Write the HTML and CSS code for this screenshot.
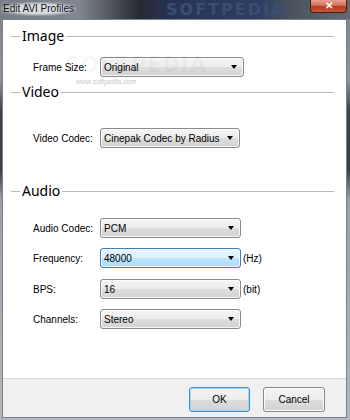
FILE: index.html
```html
<!DOCTYPE html>
<html lang="en">

<head>
    <meta charset="UTF-8">
    <meta name="viewport" content="width=device-width, initial-scale=1.0">
    <title>Edit AVI Profiles</title>
    <link rel="stylesheet" href="styles.css">
</head>

<body>
    <div class="window">
        <div class="titlebar">
            <span class="title">Edit AVI Profiles</span>
            <span class="titleMark">SOFTPEDIA</span>
            <a class="close">&#10005;</a>
        </div>

        <div class="client">
            <div class="panel">
                <div class="mark">SOFTPEDIA</div>
                <div class="markUrl">www.softpedia.com</div>

                <div class="legend"><span>Image</span></div>
                <div class="row rowFrame">
                    <span class="label">Frame Size:</span>
                    <div class="combo w144"><span>Original</span><i class="arrow"></i></div>
                </div>

                <div class="legend legendVideo"><span>Video</span></div>
                <div class="row rowVideo">
                    <span class="label">Video Codec:</span>
                    <div class="combo w140"><span>Cinepak Codec by Radius</span><i class="arrow"></i></div>
                </div>

                <div class="legend legendAudio"><span>Audio</span></div>
                <div class="audioRows">
                    <div class="row">
                        <span class="label">Audio Codec:</span>
                        <div class="combo w141"><span>PCM</span><i class="arrow"></i></div>
                    </div>
                    <div class="row">
                        <span class="label">Frequency:</span>
                        <div class="combo w141 focus"><span>48000</span><i class="arrow"></i></div>
                        <span class="unit">(Hz)</span>
                    </div>
                    <div class="row rowBps">
                        <span class="label">BPS:</span>
                        <div class="combo w141"><span>16</span><i class="arrow"></i></div>
                        <span class="unit">(bit)</span>
                    </div>
                    <div class="row">
                        <span class="label">Channels:</span>
                        <div class="combo w141"><span>Stereo</span><i class="arrow"></i></div>
                    </div>
                </div>
            </div>

            <div class="footer">
                <a class="btn default">OK</a>
                <a class="btn">Cancel</a>
            </div>
        </div>
    </div>
</body>

</html>
```

FILE: styles.css
```css
html {
    width: 100%;
    height: 100%;
}

body {
    margin: 0;
    width: 350px;
    height: 420px;
    overflow: hidden;
    font-family: "Liberation Sans", Arial, sans-serif;
    font-size: 10px;
    color: #000;
}

.window {
    width: 350px;
    height: 420px;
    display: flex;
    flex-direction: column;
    background: linear-gradient(#7d838b 0, #8d939b 80px, #3f444c 110px, #3a3f47 170px, #9aa0a8 200px, #b3b8be 420px);
}

.titlebar {
    position: relative;
    height: 19px;
    display: flex;
    align-items: flex-start;
    background: linear-gradient(90deg, #767c84 0, #80868d 80px, #4a4f57 115px, #262a33 140px, #263353 170px, #2e3e62 260px, #4d545e 295px, #646a72 350px);
}

.title {
    margin: 2px 0 0 1px;
    padding: 0 2px;
    font-family: "Liberation Sans", sans-serif;
    font-size: 10px;
    line-height: 14px;
    color: #111;
    white-space: nowrap;
    background: radial-gradient(ellipse at center, rgba(220, 223, 228, 0.95) 45%, rgba(200, 204, 210, 0) 75%);
    text-shadow: 0 0 4px #e8eaee;
}

.titleMark {
    position: absolute;
    left: 166px;
    top: 1px;
    font-family: "DejaVu Sans", sans-serif;
    font-weight: bold;
    font-size: 16px;
    line-height: 18px;
    letter-spacing: 2px;
    color: #3c4d72;
}

.close {
    margin-left: auto;
    margin-right: 3px;
    width: 35px;
    height: 12px;
    border: 1px solid #4a1c12;
    border-top: none;
    border-radius: 0 0 4px 4px;
    background: linear-gradient(#e5a18f 0, #d2715b 45%, #b83a22 55%, #c9563b 100%);
    color: #fff;
    font-size: 10px;
    font-weight: bold;
    line-height: 12px;
    text-align: center;
    position: relative;
    z-index: 1;
}

.client {
    flex: 1;
    margin: 0 3px 2px 2px;
    border: 1px solid #7a828c;
    display: flex;
    flex-direction: column;
    background-color: #f0f0f0;
}

.panel {
    position: relative;
    height: 359px;
    box-sizing: border-box;
    padding-top: 6px;
    background-color: #fff;
    border-bottom: 1px solid #d6d6d6;
}

.mark {
    position: absolute;
    left: 62px;
    top: 33px;
    font-family: "DejaVu Sans", sans-serif;
    font-weight: bold;
    font-size: 21px;
    letter-spacing: 1px;
    color: rgba(0, 0, 0, 0.035);
}

.markUrl {
    position: absolute;
    left: 73px;
    top: 58px;
    font-size: 7px;
    color: #c8c8c8;
}

.legend {
    display: flex;
    align-items: center;
    height: 20px;
    margin: 0 12px 0 8px;
    font-family: "Noto Sans", sans-serif;
    font-size: 14px;
    line-height: 20px;
}

.legend span {
    padding: 0 2px;
}

.legend::before {
    content: "";
    width: 9px;
    height: 1px;
    background-color: #b9b9b9;
}

.legend::after {
    content: "";
    flex: 1;
    height: 1px;
    background-color: #b9b9b9;
}

.legendVideo {
    margin-top: 5px;
}

.legendAudio {
    margin-top: 33px;
}

.row {
    display: flex;
    align-items: center;
    height: 20px;
    padding-left: 30px;
    white-space: nowrap;
}

.rowFrame {
    margin-top: 11px;
}

.rowVideo {
    margin-top: 26px;
}

.audioRows {
    margin-top: 17px;
    display: flex;
    flex-direction: column;
    gap: 10px;
}

.rowBps {
    margin-top: 1px;
}

.label {
    width: 67px;
    flex-shrink: 0;
}

.combo {
    height: 20px;
    flex-shrink: 0;
    box-sizing: border-box;
    display: flex;
    align-items: center;
    justify-content: space-between;
    padding: 0 6px 0 3px;
    border: 1px solid #8a8a8a;
    border-radius: 3px;
    background: linear-gradient(#f4f4f4 0, #ececec 50%, #dedede 50%, #d2d2d2 100%);
    box-shadow: inset 0 0 0 1px rgba(255, 255, 255, 0.8);
}

.combo.focus {
    border-color: #3c7fb1;
    background: linear-gradient(#eaf6fd 0, #d9f0fc 50%, #bee6fd 50%, #a9dbf6 100%);
}

.w140 {
    width: 140px;
}

.w141 {
    width: 141px;
}

.w144 {
    width: 144px;
}

.arrow {
    width: 0;
    height: 0;
    border-left: 3px solid transparent;
    border-right: 3px solid transparent;
    border-top: 4px solid #000;
}

.unit {
    margin-left: 2px;
}

.footer {
    flex: 1;
    display: flex;
    justify-content: flex-end;
    align-items: flex-start;
    gap: 13px;
    padding: 8px 21px 0 0;
}

.btn {
    width: 62px;
    height: 25px;
    box-sizing: border-box;
    display: flex;
    align-items: center;
    justify-content: center;
    border: 1px solid #8a8a8a;
    border-radius: 3px;
    background: linear-gradient(#f4f4f4 0, #ececec 50%, #dedede 50%, #d2d2d2 100%);
    box-shadow: inset 0 0 0 1px #fbfbfb;
    cursor: pointer;
}

.btn.default {
    width: 61px;
    border-color: #3f8fd2;
    box-shadow: inset 0 0 0 1px #9fd6f6;
}
```
